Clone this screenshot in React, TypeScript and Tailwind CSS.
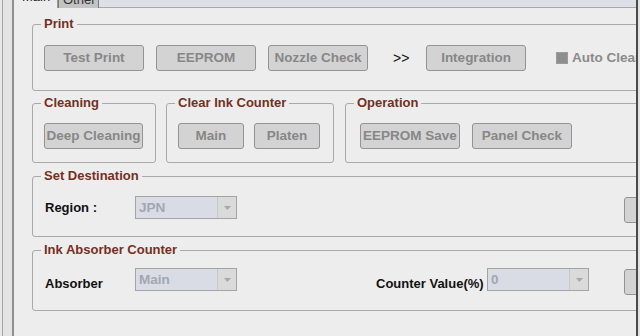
import type { ReactNode } from "react";

const btn =
  "flex h-[26px] shrink-0 items-center justify-center whitespace-nowrap rounded-[3px] border border-[#939393] bg-[#d3d3d3] text-[13.5px] font-bold leading-none text-[#878787]";

const Group = ({
  title,
  className,
  children,
}: {
  title: string;
  className: string;
  children: ReactNode;
}) => (
  <fieldset className={`shrink-0 rounded-[3px] border border-[#a9a9a9] ${className}`}>
    <legend className="ml-[8px] px-[3px] text-[13px] font-bold leading-4 text-[#74301f]">
      {title}
    </legend>
    {children}
  </fieldset>
);

const Combo = ({ value }: { value: string }) => (
  <div className="flex h-[23px] w-[102px] shrink-0 border border-[#a4a4a4] bg-[#d9dce4]">
    <span className="flex-1 pl-[3px] pt-[3px] text-[13.5px] font-bold leading-4 text-[#a2a6b2]">
      {value}
    </span>
    <span className="flex w-[19px] items-center justify-center border-l border-[#c8c8c8] bg-[#dadada]">
      <svg width="7" height="4" viewBox="0 0 7 4">
        <path d="M0 0h7L3.5 4z" fill="#a8a8a8" />
      </svg>
    </span>
  </div>
);

const label = "shrink-0 whitespace-nowrap text-[13px] font-bold leading-4 text-[#111]";

export default function App() {
  return (
    <div className="flex h-[336px] w-[640px] overflow-hidden bg-[#e6e6e6] font-['Liberation_Sans',Arial,sans-serif]">
      <div className="w-[2px] bg-[#e8e8e8]" />
      <div className="w-px bg-[#a5a5a5]" />
      <div className="w-[9px] bg-[#e4e4e4]" />

      <div className="flex w-[626px] shrink-0 flex-col overflow-hidden border-l-2 border-r-2 border-l-[#8e8e8e] border-r-[#4a4a4a] bg-[#ededed]">
        {/* tabs */}
        <div className="flex h-[8px] shrink-0 overflow-hidden">
          <div className="w-[43px] pl-[8px] text-[13px] leading-4 text-[#222]">
            <div className="-mt-[11px]">Main</div>
          </div>
          <div className="w-px bg-[#9a9a9a]" />
          <div className="w-[41px] border-x border-[#7a7a7a] bg-[#c3c3c3] pl-[4px] text-[13px] leading-4 text-[#333]">
            <div className="-mt-[8px]">Other</div>
          </div>
          <div className="flex-1 border-b border-[#a8a8a8] bg-[#dde0e6]" />
        </div>

        <div className="flex flex-col pl-[18px] pt-[8px]">
          {/* Print */}
          <Group title="Print" className="w-[640px]">
            <div className="flex items-center pb-[19px] pl-[11px] pt-[13px]">
              <button className={`${btn} w-[100px]`}>Test Print</button>
              <button className={`${btn} ml-[12px] w-[100px]`}>EEPROM</button>
              <button className={`${btn} ml-[12px] w-[100px]`}>Nozzle Check</button>
              <span className="ml-[25px] w-[17px] text-[14px] leading-none text-[#111]">&gt;&gt;</span>
              <button className={`${btn} ml-[16px] w-[100px]`}>Integration</button>
              <span className="ml-[30px] h-[12px] w-[12px] border border-[#9a9a9a] bg-[#8e8e8e]" />
              <span className="ml-[4px] whitespace-nowrap text-[13.5px] font-bold text-[#8a8a8a]">
                Auto Clear
              </span>
            </div>
          </Group>

          {/* Cleaning / Clear Ink Counter / Operation */}
          <div className="mt-[4px] flex">
            <Group title="Cleaning" className="w-[124px]">
              <div className="flex pb-[13px] pl-[11px] pt-[12px]">
                <button className={`${btn} w-[99px]`}>Deep Cleaning</button>
              </div>
            </Group>
            <Group title="Clear Ink Counter" className="ml-[10px] w-[168px]">
              <div className="flex pb-[13px] pl-[11px] pt-[12px]">
                <button className={`${btn} w-[66px]`}>Main</button>
                <button className={`${btn} ml-[10px] w-[66px]`}>Platen</button>
              </div>
            </Group>
            <Group title="Operation" className="ml-[11px] w-[400px]">
              <div className="flex pb-[13px] pl-[14px] pt-[12px]">
                <button className={`${btn} w-[100px]`}>EEPROM Save</button>
                <button className={`${btn} ml-[12px] w-[100px]`}>Panel Check</button>
              </div>
            </Group>
          </div>

          {/* Set Destination */}
          <Group title="Set Destination" className="mt-[5px] w-[640px]">
            <div className="flex items-start pb-[13px] pl-[12px] pt-[12px]">
              <span className={`${label} mt-[4px] w-[90px]`}>Region :</span>
              <Combo value="JPN" />
              <button className={`${btn} ml-[387px] mt-[1px] w-[80px]`} />
            </div>
          </Group>

          {/* Ink Absorber Counter */}
          <Group title="Ink Absorber Counter" className="mt-[5px] w-[640px]">
            <div className="flex items-start pb-[15px] pl-[12px] pt-[10px]">
              <span className={`${label} mt-[8px] w-[90px]`}>Absorber</span>
              <Combo value="Main" />
              <span className={`${label} ml-[139px] mt-[8px] w-[111px]`}>Counter Value(%)</span>
              <Combo value="0" />
              <button className={`${btn} ml-[35px] mt-[1px] w-[80px]`} />
            </div>
          </Group>
        </div>
      </div>
      <div className="w-[2px] bg-[#e2e2e2]" />
    </div>
  );
}
